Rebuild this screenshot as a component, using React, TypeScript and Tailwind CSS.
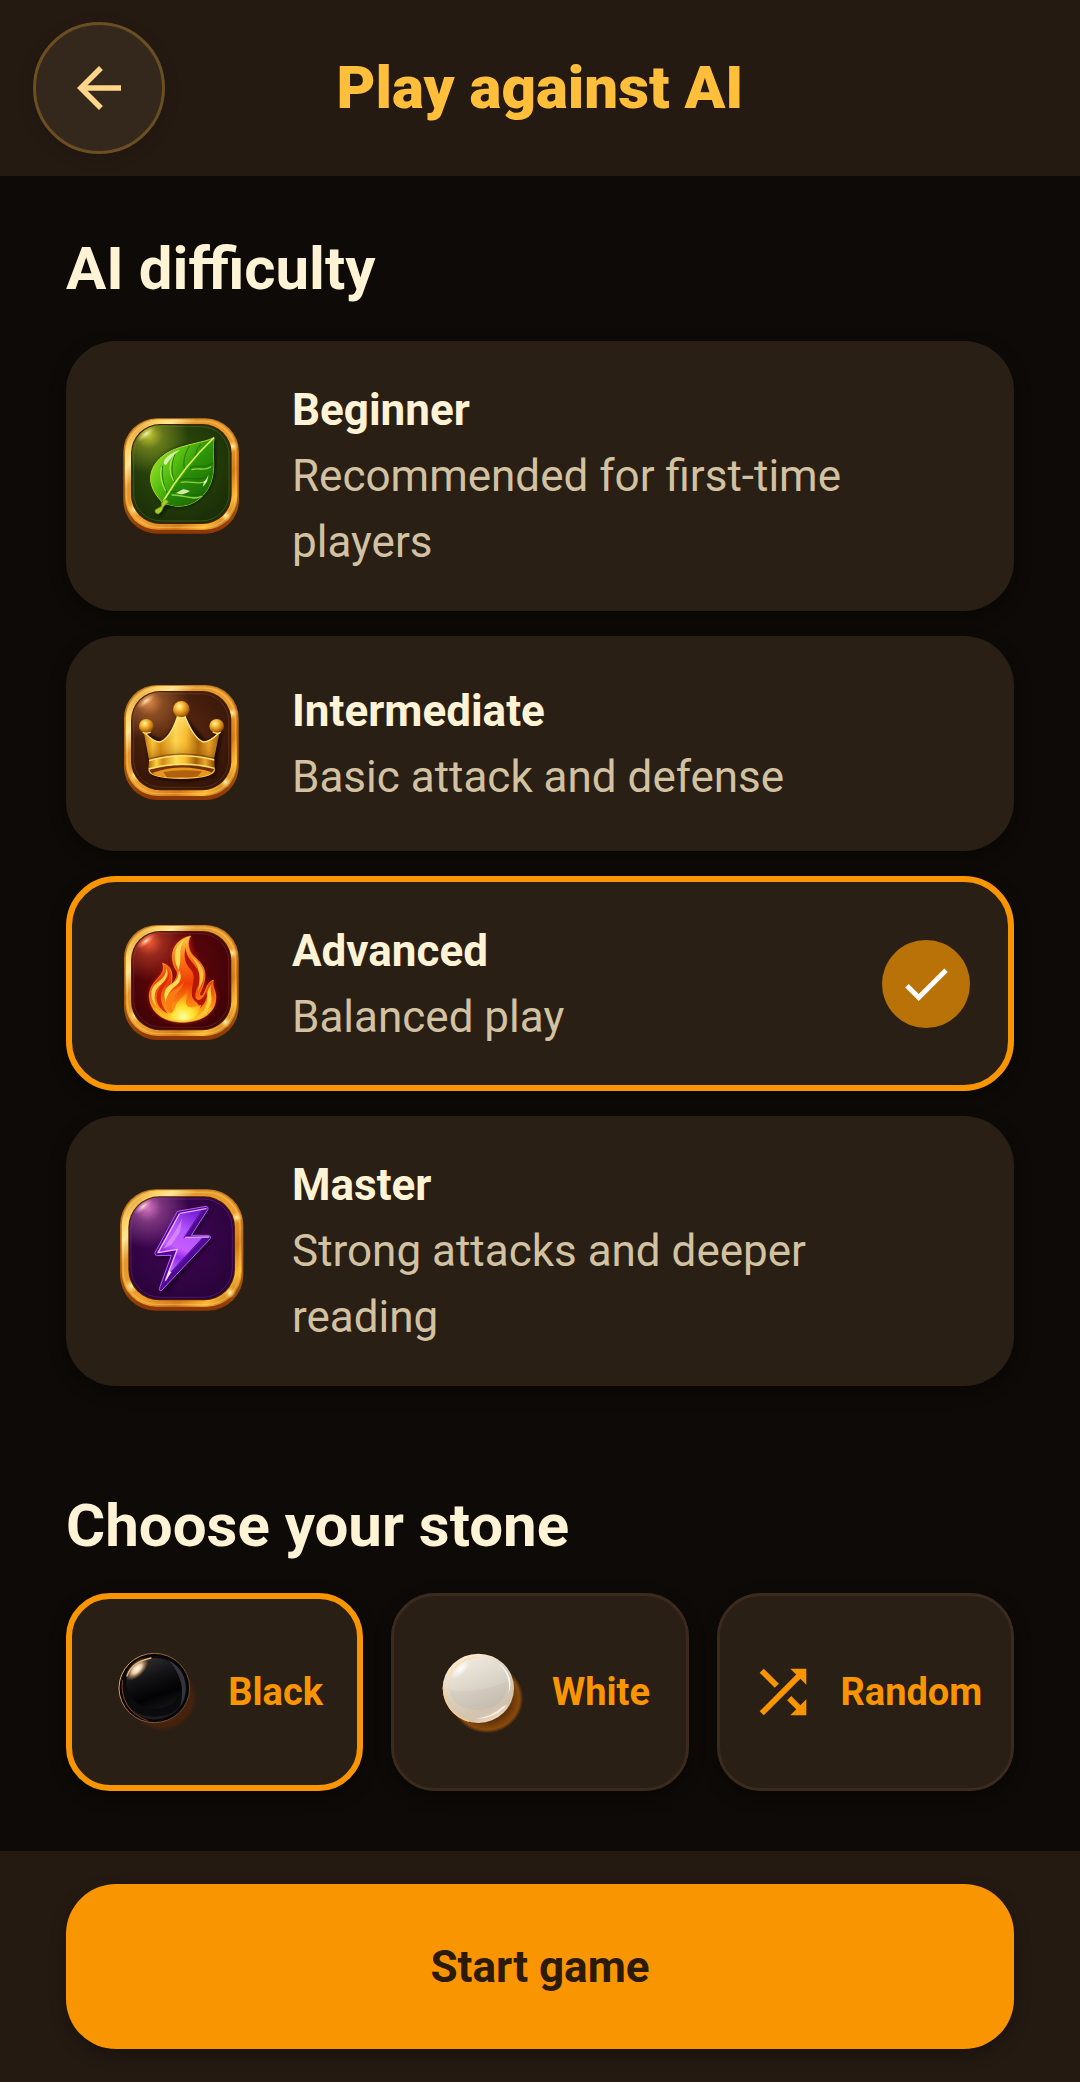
import { useState, type ReactNode } from "react";

type Box = [number, number, number, number];

/* Rounded square given by its left, top, right and bottom edges. */
function Plate({ box, inset = [0, 0, 0, 0], ...rest }: { box: Box; inset?: Box } & React.SVGProps<SVGRectElement>) {
  const x = box[0] + inset[0];
  const y = box[1] + inset[1];
  const width = box[2] - inset[2] - x;
  const height = box[3] - inset[3] - y;
  return <rect x={x} y={y} width={width} height={height} rx={width * 0.29} {...rest} />;
}

type BadgeProps = {
  id: string;
  top: number;
  outer: Box;
  inner: Box;
  center: string;
  edge: string;
  shine: string;
  rim: string;
  children: ReactNode;
};

/* Glossy game badge: gold bevelled frame around a coloured enamel plate. */
function Badge({ id, top, outer, inner, center, edge, shine, rim, children }: BadgeProps) {
  const [l, t, r, b] = outer;
  const [il, it] = inner;
  return (
    <svg viewBox={`30 ${top} 429 429`} className="size-[143px] shrink-0" aria-hidden="true">
      <defs>
        <linearGradient id={`${id}-gold`} x1="0" y1="0" x2="1" y2="1">
          <stop offset="0" stopColor="#b9690f" />
          <stop offset="0.15" stopColor="#ffd263" />
          <stop offset="0.22" stopColor="#ffe796" />
          <stop offset="0.32" stopColor="#e3962a" />
          <stop offset="0.55" stopColor="#ee9f2d" />
          <stop offset="0.72" stopColor="#d67a17" />
          <stop offset="0.84" stopColor="#ffb833" />
          <stop offset="1" stopColor="#8a3a05" />
        </linearGradient>
        <linearGradient id={`${id}-under`} x1="0" y1="0" x2="0" y2="1">
          <stop offset="0" stopColor="#c87c1d" />
          <stop offset="0.7" stopColor="#a75c0e" />
          <stop offset="1" stopColor="#8c3605" />
        </linearGradient>
        <radialGradient id={`${id}-plate`} cx="0.45" cy="0.38" r="0.85">
          <stop offset="0" stopColor={center} />
          <stop offset="1" stopColor={edge} />
        </radialGradient>
        <radialGradient id={`${id}-shine`} cx="0.17" cy="0.1" r="0.4">
          <stop offset="0" stopColor={shine} stopOpacity="0.95" />
          <stop offset="0.35" stopColor={shine} stopOpacity="0.4" />
          <stop offset="1" stopColor={shine} stopOpacity="0" />
        </radialGradient>
        <radialGradient id={`${id}-spark`}>
          <stop offset="0" stopColor="#fff6bd" />
          <stop offset="1" stopColor="#ffc545" stopOpacity="0" />
        </radialGradient>
        <radialGradient id={`${id}-glint`}>
          <stop offset="0" stopColor="#fff8d8" stopOpacity="0.9" />
          <stop offset="1" stopColor={shine} stopOpacity="0" />
        </radialGradient>
      </defs>
      <Plate box={outer} fill={`url(#${id}-under)`} />
      <Plate box={outer} inset={[5, 3, 5, 12]} fill={`url(#${id}-gold)`} />
      <Plate box={outer} inset={[10, 9, 10, 19]} fill="none" stroke="#ffe08a" strokeOpacity="0.35" strokeWidth="4" />
      <circle cx={l + 34} cy={b - 74} r="22" fill={`url(#${id}-spark)`} />
      <circle cx={r - 40} cy={b - 54} r="18" fill={`url(#${id}-spark)`} />
      <circle cx={r - 20} cy={t + 84} r="18" fill={`url(#${id}-spark)`} />
      <Plate box={inner} inset={[-3, -3, -3, -3]} fill="#4a2106" />
      <Plate box={inner} fill={`url(#${id}-plate)`} />
      <Plate box={inner} fill={`url(#${id}-shine)`} />
      <Plate box={inner} inset={[5, 5, 5, 6]} fill="none" stroke={rim} strokeOpacity="0.35" strokeWidth="3" />
      <ellipse cx={il + 42} cy={it + 27} rx="34" ry="13" transform={`rotate(-38 ${il + 42} ${it + 27})`} fill={`url(#${id}-glint)`} />
      {children}
    </svg>
  );
}

function LeafIcon() {
  return (
    <Badge id="leaf" top={44} outer={[70, 84, 417, 430]} inner={[96, 104, 392, 398]} center="#30500d" edge="#142406" shine="#c9cf33" rim="#6f9a3c">
      <defs>
        <linearGradient id="leaf-fill" x1="0" y1="0.2" x2="1" y2="0.9">
          <stop offset="0" stopColor="#a4ea2c" />
          <stop offset="0.35" stopColor="#52bd10" />
          <stop offset="0.6" stopColor="#2a8c08" />
          <stop offset="1" stopColor="#6fd321" />
        </linearGradient>
        <linearGradient id="leaf-low" x1="0" y1="0" x2="0.6" y2="1">
          <stop offset="0" stopColor="#8be52b" />
          <stop offset="0.5" stopColor="#2f960a" />
          <stop offset="1" stopColor="#1b6c06" />
        </linearGradient>
        <filter id="leaf-soft" x="-30%" y="-30%" width="160%" height="160%">
          <feGaussianBlur stdDeviation="4" />
        </filter>
      </defs>
      <path d="M348 150C330 158 230 158 190 195C152 228 144 278 178 322L190 346L168 372L184 378L206 350C262 362 318 334 340 270C354 228 344 190 348 150Z" fill="#061002" opacity="0.6" filter="url(#leaf-soft)" />
      <path d="M342 142C310 160 222 162 180 204C142 242 142 286 182 330C184 338 196 342 208 343C252 358 310 336 332 278C350 228 334 190 342 142Z" fill="url(#leaf-fill)" stroke="#b4dc2a" strokeWidth="3" />
      <path d="M342 142C318 180 250 246 190 336C198 342 204 343 208 343C252 358 310 336 332 278C350 228 334 190 342 142Z" fill="url(#leaf-low)" />
      <g fill="none" stroke="#1b6506" strokeWidth="3" strokeOpacity="0.8">
        <path d="M204 312C190 286 184 256 188 226" />
        <path d="M226 280C212 250 214 218 226 188" />
        <path d="M256 242C246 220 254 190 268 168" />
        <path d="M288 204C284 190 292 174 302 162" />
        <path d="M212 304C250 300 290 330 312 302" />
        <path d="M238 268C266 258 302 278 334 250" />
        <path d="M270 232C290 222 312 236 338 218" />
      </g>
      <g fill="none" stroke="#c7f95e" strokeWidth="4" strokeOpacity="0.65" strokeLinecap="round">
        <path d="M196 300C182 274 180 250 184 232" />
        <path d="M220 270C206 246 208 220 220 196" />
        <path d="M216 314C250 312 280 332 304 318" />
        <path d="M244 276C270 270 298 286 320 272" />
        <path d="M276 238C294 230 312 244 332 230" />
      </g>
      <path d="M194 208C206 192 222 184 240 178C222 192 210 204 200 222C194 226 188 220 194 208ZM246 298C252 294 262 300 270 302C258 312 240 314 228 308ZM312 274C320 266 324 258 326 250C324 270 318 280 308 290Z" fill="#eaffc0" opacity="0.85" />
      <path d="M342 142C308 174 246 238 190 332" fill="none" stroke="#d4ee59" strokeWidth="5" />
      <path d="M196 326L184 338L184 348L166 358Q162 370 176 371Q188 364 190 350L206 334Z" fill="#a6cc2c" stroke="#627d12" strokeWidth="2" />
    </Badge>
  );
}

function CrownIcon() {
  return (
    <Badge id="crown" top={36} outer={[72, 75, 416, 420]} inner={[96, 96, 391, 388]} center="#5c2910" edge="#280f06" shine="#e99149" rim="#9a5b3a">
      <defs>
        <linearGradient id="crown-body" x1="0" y1="0" x2="1" y2="0">
          <stop offset="0" stopColor="#b96b08" />
          <stop offset="0.12" stopColor="#ffcf3f" />
          <stop offset="0.22" stopColor="#d48a15" />
          <stop offset="0.42" stopColor="#ffdd56" />
          <stop offset="0.56" stopColor="#f9bd32" />
          <stop offset="0.72" stopColor="#a45f09" />
          <stop offset="0.86" stopColor="#eda72a" />
          <stop offset="1" stopColor="#8c4b05" />
        </linearGradient>
        <linearGradient id="crown-shade" x1="0" y1="0" x2="0" y2="1">
          <stop offset="0" stopColor="#fff09a" stopOpacity="0.45" />
          <stop offset="0.55" stopColor="#e9a020" stopOpacity="0.1" />
          <stop offset="1" stopColor="#8c4a04" stopOpacity="0.65" />
        </linearGradient>
        <radialGradient id="crown-ball" cx="0.38" cy="0.32" r="0.7">
          <stop offset="0" stopColor="#fff8b6" />
          <stop offset="0.35" stopColor="#fbbd33" />
          <stop offset="0.8" stopColor="#b96c0d" />
          <stop offset="1" stopColor="#7b3f05" />
        </radialGradient>
        <filter id="crown-soft" x="-30%" y="-30%" width="160%" height="160%">
          <feGaussianBlur stdDeviation="5" />
        </filter>
      </defs>
      <path d="M136 216L150 346Q246 384 346 346L366 214L318 244L248 160L190 244Z" fill="#100401" opacity="0.7" filter="url(#crown-soft)" />
      <path d="M131 215Q160 246 180 246Q210 236 232 172L256 172Q284 238 310 246Q330 246 359 217L341 300Q244 276 148 302Z" fill="url(#crown-body)" />
      <path d="M131 215Q160 246 180 246Q210 236 232 172L256 172Q284 238 310 246Q330 246 359 217L341 300Q244 276 148 302Z" fill="url(#crown-shade)" />
      <path d="M131 215Q160 246 180 246Q210 236 232 172M256 172Q284 238 310 246Q330 246 359 217" fill="none" stroke="#ffe879" strokeWidth="4" />
      <path d="M147 302Q244 274 343 300L343 338Q332 354 244 355Q156 352 147 340Z" fill="#743004" />
      <path d="M158 338Q244 308 334 336Q324 353 244 353Q166 352 158 338Z" fill="#e9961f" />
      <path d="M190 336Q244 326 306 334L290 352L200 352Z" fill="#8a3a05" opacity="0.6" />
      <path d="M147 300Q244 272 343 298L344 328Q244 302 145 330Z" fill="url(#crown-body)" />
      <path d="M147 302Q244 274 343 300M146 327Q244 299 344 325" fill="none" stroke="#ffe779" strokeWidth="4" />
      <path d="M148 296Q244 268 342 294M145 333Q244 305 344 331" fill="none" stroke="#693204" strokeWidth="2" />
      <path d="M147 330Q150 354 244 355Q338 354 344 328" fill="none" stroke="#ffc43d" strokeWidth="4" />
      <ellipse cx="139" cy="198" rx="22" ry="21" fill="url(#crown-ball)" />
      <ellipse cx="350" cy="198" rx="22" ry="21" fill="url(#crown-ball)" />
      <circle cx="244" cy="148" r="25" fill="url(#crown-ball)" />
      <path d="M128 217Q140 223 152 216M338 216Q350 223 362 217M230 170Q244 177 258 170" fill="none" stroke="#ffe37a" strokeWidth="4" />
    </Badge>
  );
}

function FlameIcon() {
  return (
    <Badge id="flame" top={36} outer={[72, 75, 416, 420]} inner={[96, 96, 391, 388]} center="#66060a" edge="#330307" shine="#ff633a" rim="#b03a48">
      <defs>
        <linearGradient id="flame-outer" x1="0" y1="0" x2="0" y2="1">
          <stop offset="0" stopColor="#ffc845" />
          <stop offset="0.25" stopColor="#ff7a17" />
          <stop offset="0.55" stopColor="#ee3c06" />
          <stop offset="0.85" stopColor="#ff9a14" />
          <stop offset="1" stopColor="#ffd52c" />
        </linearGradient>
        <radialGradient id="flame-core" cx="0.5" cy="0.85" r="0.75">
          <stop offset="0" stopColor="#ffffa0" />
          <stop offset="0.4" stopColor="#ffe02c" />
          <stop offset="0.8" stopColor="#ff9c14" />
          <stop offset="1" stopColor="#ff6a0a" />
        </radialGradient>
        <filter id="flame-glow" x="-30%" y="-30%" width="160%" height="160%">
          <feGaussianBlur stdDeviation="8" />
        </filter>
      </defs>
      <path d="M272 108C206 128 210 180 232 226L214 258C222 220 214 200 188 190C200 232 150 232 148 286C150 340 194 366 246 367C304 366 346 340 347 292C350 270 334 260 340 240C322 250 318 266 312 276C334 214 264 176 272 108Z" fill="#f02206" opacity="0.65" filter="url(#flame-glow)" />
      <path d="M272 108C214 120 204 176 232 216C234 232 222 246 212 258C222 220 214 198 188 190C202 230 150 236 148 288C150 342 196 366 246 367C304 366 346 340 347 296C350 274 334 262 340 240C320 248 320 268 310 284C304 292 296 288 300 278C330 214 310 194 280 168C264 152 260 126 272 108Z" fill="url(#flame-outer)" stroke="#ffa63b" strokeWidth="2" />
      <path d="M254 118C224 138 216 170 234 206C252 234 238 250 222 262C206 276 196 294 202 318C186 284 192 262 218 250C244 232 232 214 240 190C244 168 234 148 254 118Z" fill="#ffdc56" />
      <path d="M258 142C254 176 294 196 298 224C304 250 284 266 286 290C292 310 312 296 318 276C326 290 314 314 296 328C304 306 276 306 276 284C274 252 292 228 270 206C254 190 250 166 258 142Z" fill="#b51503" />
      <path d="M272 166C290 184 318 200 310 238C306 256 298 264 294 276C302 232 304 210 272 166Z" fill="#ffbc38" />
      <path d="M198 204C212 226 192 246 178 258C162 272 158 300 174 324C150 302 146 270 168 250C188 236 200 226 198 204Z" fill="#ffd24c" />
      <path d="M206 214C214 238 190 252 184 278C178 302 190 326 206 342C174 328 162 298 174 272C184 252 208 240 206 214Z" fill="#d62a05" />
      <path d="M336 252C326 270 338 284 334 306C328 330 310 344 294 350C320 330 320 312 322 292C322 274 326 262 336 252Z" fill="#ffcf3d" />
      <path d="M254 236C250 268 220 280 216 310C214 330 224 346 236 352C206 346 192 322 200 294C212 264 248 266 254 236Z" fill="#ff7c12" />
      <path d="M262 266C268 292 250 302 262 318C272 328 290 318 304 314C296 340 284 364 246 366C214 364 196 350 194 336C208 346 222 338 226 320C230 298 258 290 262 266Z" fill="url(#flame-core)" />
      <path d="M168 326Q200 362 246 364Q300 362 332 324" fill="none" stroke="#ffca2a" strokeWidth="4" strokeLinecap="round" />
    </Badge>
  );
}

function BoltIcon() {
  return (
    <Badge id="bolt" top={44} outer={[60, 72, 430, 436]} inner={[88, 96, 402, 402]} center="#420558" edge="#220330" shine="#e07cc8" rim="#9a35c4">
      <defs>
        <linearGradient id="bolt-fill" x1="0.6" y1="0" x2="0.35" y2="1">
          <stop offset="0" stopColor="#7c22d8" />
          <stop offset="0.25" stopColor="#b455ff" />
          <stop offset="0.5" stopColor="#c65cff" />
          <stop offset="0.62" stopColor="#9628ee" />
          <stop offset="0.85" stopColor="#c77aff" />
          <stop offset="1" stopColor="#5b16a8" />
        </linearGradient>
        <filter id="bolt-soft" x="-30%" y="-30%" width="160%" height="160%">
          <feGaussianBlur stdDeviation="6" />
        </filter>
      </defs>
      <path d="M242 144L330 130L276 220L342 218L190 384L226 274L170 276Z" fill="#0c0012" opacity="0.8" filter="url(#bolt-soft)" />
      <path d="M232 138L318 123Q326 124 324 132L274 210L326 210Q334 212 331 220L186 374Q178 380 178 370L214 270L170 271Q162 268 165 262Z" fill="#4d0c91" stroke="#c05cf7" strokeWidth="3" strokeLinejoin="round" />
      <path d="M238 146L306 132L250 218L306 218L208 324L188 364L232 254L174 262Z" fill="url(#bolt-fill)" />
      <path d="M238 146L174 262L232 252L196 346" fill="none" stroke="#f0b8ff" strokeWidth="4" strokeLinejoin="round" />
      <path d="M240 144L318 130M256 216L326 215" fill="none" stroke="#e6a6ff" strokeWidth="4" strokeLinecap="round" />
      <path d="M306 136L252 218M304 224L210 326" fill="none" stroke="#6a1cc0" strokeWidth="3" />
      <path d="M232 188L246 160L240 200L214 238L190 250Z" fill="#e2a3ff" opacity="0.6" />
      <path d="M206 318L214 320L198 346Z" fill="#ffe6ff" />
    </Badge>
  );
}

function BlackStone() {
  return (
    <svg viewBox="201 216 300 300" className="size-[100px] shrink-0" aria-hidden="true">
      <defs>
        <radialGradient id="bs-shadow">
          <stop offset="0.6" stopColor="#4c230a" />
          <stop offset="0.85" stopColor="#4c230a" stopOpacity="0.75" />
          <stop offset="1" stopColor="#4c230a" stopOpacity="0" />
        </radialGradient>
        <linearGradient id="bs-body" x1="0.2" y1="0" x2="0.6" y2="1">
          <stop offset="0" stopColor="#33302f" />
          <stop offset="0.4" stopColor="#131316" />
          <stop offset="0.75" stopColor="#020203" />
          <stop offset="1" stopColor="#131317" />
        </linearGradient>
        <linearGradient id="bs-edge" x1="0" y1="0.3" x2="1" y2="0.7">
          <stop offset="0" stopColor="#f6b266" />
          <stop offset="0.3" stopColor="#a2683a" />
          <stop offset="1" stopColor="#5d4636" />
        </linearGradient>
        <radialGradient id="bs-glint">
          <stop offset="0" stopColor="#ffffff" />
          <stop offset="0.4" stopColor="#ffe0b8" stopOpacity="0.9" />
          <stop offset="1" stopColor="#d08a4a" stopOpacity="0" />
        </radialGradient>
      </defs>
      <ellipse cx="370" cy="384" rx="104" ry="100" fill="url(#bs-shadow)" />
      <ellipse cx="346" cy="354" rx="106" ry="104" fill="#050507" stroke="url(#bs-edge)" strokeWidth="3" />
      <ellipse cx="346" cy="354" rx="98" ry="97" fill="#0b0b0e" />
      <path d="M256 388A96 92 0 0 0 436 388Q410 440 346 440Q282 440 256 388Z" fill="#1d1d22" />
      <ellipse cx="348" cy="340" rx="86" ry="76" fill="url(#bs-body)" />
      <path d="M388 270Q444 302 440 362Q438 390 424 408Q444 330 388 270Z" fill="#3d3f48" opacity="0.8" />
      <ellipse cx="294" cy="297" rx="44" ry="22" transform="rotate(-45 294 297)" fill="url(#bs-glint)" />
      <path d="M264 318Q278 276 336 264" fill="none" stroke="#e7b27a" strokeWidth="4" strokeLinecap="round" />
      <path d="M250 330Q242 420 326 452" fill="none" stroke="#7a4420" strokeWidth="3" />
    </svg>
  );
}

function WhiteStone() {
  return (
    <svg viewBox="1173 216 300 300" className="size-[100px] shrink-0" aria-hidden="true">
      <defs>
        <radialGradient id="ws-shadow">
          <stop offset="0.6" stopColor="#5a2c06" />
          <stop offset="0.9" stopColor="#894a0d" />
          <stop offset="1" stopColor="#894a0d" stopOpacity="0.1" />
        </radialGradient>
        <linearGradient id="ws-base" x1="0.2" y1="0" x2="0.7" y2="1">
          <stop offset="0" stopColor="#fff1da" />
          <stop offset="0.5" stopColor="#d9cdbb" />
          <stop offset="0.85" stopColor="#d2c2ae" />
          <stop offset="1" stopColor="#f4dfc6" />
        </linearGradient>
        <linearGradient id="ws-body" x1="0.2" y1="0" x2="0.7" y2="1">
          <stop offset="0" stopColor="#f1ebe0" />
          <stop offset="0.5" stopColor="#dcd6ca" />
          <stop offset="1" stopColor="#c8c0b3" />
        </linearGradient>
        <radialGradient id="ws-glint">
          <stop offset="0" stopColor="#ffffff" />
          <stop offset="1" stopColor="#ffffff" stopOpacity="0" />
        </radialGradient>
      </defs>
      <ellipse cx="1344" cy="386" rx="108" ry="103" fill="url(#ws-shadow)" />
      <ellipse cx="1318" cy="355" rx="107" ry="104" fill="url(#ws-base)" />
      <path d="M1213 350Q1216 430 1290 454" fill="none" stroke="#ffc983" strokeWidth="4" />
      <ellipse cx="1320" cy="342" rx="88" ry="78" fill="url(#ws-body)" />
      <path d="M1234 360Q1320 372 1406 334Q1400 420 1320 420Q1244 420 1234 360Z" fill="#b9b0a2" opacity="0.2" />
      <path d="M1366 272Q1420 308 1408 372Q1432 310 1366 272Z" fill="#ffffff" opacity="0.9" />
      <path d="M1390 410Q1360 440 1310 446Q1370 446 1404 404Z" fill="#fff8ec" opacity="0.8" />
      <ellipse cx="1264" cy="297" rx="38" ry="17" transform="rotate(-45 1264 297)" fill="url(#ws-glint)" />
      <path d="M1232 316Q1256 268 1312 261" fill="none" stroke="#ffdcaa" strokeWidth="4" strokeLinecap="round" />
    </svg>
  );
}

function ShuffleIcon() {
  return (
    <svg viewBox="0 0 24 24" className="size-[70px] shrink-0 fill-current" aria-hidden="true">
      <path d="M10.59 9.17L5.41 4 4 5.41l5.17 5.17 1.42-1.41zM14.5 4l2.04 2.04L4 18.59 5.41 20 17.96 7.46 20 9.5V4h-5.5zm.33 9.41l-1.41 1.41 3.13 3.13L14.5 20H20v-5.5l-2.04 2.04-3.13-3.13z" />
    </svg>
  );
}

const levels = [
  { id: "beginner", name: "Beginner", text: "Recommended for first-time players", icon: <LeafIcon /> },
  { id: "intermediate", name: "Intermediate", text: "Basic attack and defense", icon: <CrownIcon /> },
  { id: "advanced", name: "Advanced", text: "Balanced play", icon: <FlameIcon /> },
  { id: "master", name: "Master", text: "Strong attacks and deeper reading", icon: <BoltIcon /> },
];

const stones = [
  { id: "black", name: "Black", icon: <BlackStone /> },
  { id: "white", name: "White", icon: <WhiteStone /> },
  { id: "random", name: "Random", icon: <ShuffleIcon /> },
];

export default function App() {
  const [level, setLevel] = useState("advanced");
  const [stone, setStone] = useState("black");

  return (
    <div className="flex min-h-screen flex-col bg-[#0d0a07] font-[Roboto,sans-serif] text-[#fff3d6]">
      <header className="grid grid-cols-[132px_1fr_132px] items-center bg-[#241a12] px-[33px] py-[22px]">
        <button
          type="button"
          aria-label="Back"
          className="flex size-[132px] items-center justify-center rounded-full border-[3px] border-[#6b4f22] bg-[#34281d] text-[#ffd58a] shadow-[0_4px_16px_rgba(0,0,0,0.15)]"
        >
          <svg viewBox="0 0 24 24" className="size-[66px] fill-current" aria-hidden="true">
            <path d="M20 11H7.83l5.59-5.59L12 4l-8 8 8 8 1.41-1.41L7.83 13H20v-2z" />
          </svg>
        </button>
        <h1 className="text-center text-[60px] leading-[76px] font-black text-[#ffbf3a]">Play against AI</h1>
      </header>

      <main className="flex flex-1 flex-col px-[66px] pt-[55px] pb-[60px]">
        <h2 id="level-title" className="text-[60px] leading-[76px] font-bold">AI difficulty</h2>
        <div role="radiogroup" aria-labelledby="level-title" className="mt-[34px] flex flex-col gap-[25px]">
          {levels.map((item) => (
            <label
              key={item.id}
              className="relative flex cursor-pointer items-center rounded-[50px] bg-[#291f15] px-[44px] py-[36px] shadow-[0_6px_16px_rgba(0,0,0,0.35)] has-checked:outline-6 has-checked:-outline-offset-6 has-checked:outline-[#f99500]"
            >
              <input
                type="radio"
                name="level"
                value={item.id}
                checked={level === item.id}
                onChange={() => setLevel(item.id)}
                className="sr-only"
              />
              {item.icon}
              <span className="mr-[22px] ml-[39px] flex-1 text-[44px] leading-[66px]">
                <span className="block font-bold">{item.name}</span>
                <span className="block text-[#d3c2a2]">{item.text}</span>
              </span>
              {level === item.id && (
                <span className="flex size-[88px] shrink-0 items-center justify-center rounded-full bg-[#b97207] text-white">
                  <svg viewBox="0 0 24 24" className="size-[58px] fill-current" aria-hidden="true">
                    <path d="M9 16.17L4.83 12l-1.42 1.41L9 19 21 7l-1.41-1.41z" />
                  </svg>
                </span>
              )}
            </label>
          ))}
        </div>

        <h2 id="stone-title" className="mt-[102px] text-[60px] leading-[76px] font-bold">Choose your stone</h2>
        <div role="radiogroup" aria-labelledby="stone-title" className="mt-[29px] grid grid-cols-3 gap-[28px]">
          {stones.map((item) => (
            <label
              key={item.id}
              className="relative flex h-[198px] cursor-pointer items-center justify-center gap-[22px] rounded-[44px] bg-[#291f15] text-[38px] leading-[55px] font-bold text-[#f99500] shadow-[0_6px_16px_rgba(0,0,0,0.35)] outline-3 -outline-offset-3 outline-[#3b2a1e] has-checked:outline-6 has-checked:-outline-offset-6 has-checked:outline-[#f99500]"
            >
              <input
                type="radio"
                name="stone"
                value={item.id}
                checked={stone === item.id}
                onChange={() => setStone(item.id)}
                className="sr-only"
              />
              {item.icon}
              <span>{item.name}</span>
            </label>
          ))}
        </div>
      </main>

      <footer className="bg-[#241a12] px-[66px] py-[33px]">
        <button
          type="button"
          className="h-[165px] w-full rounded-[50px] bg-[#f99500] text-[44px] leading-[66px] font-bold text-[#2b1a05] shadow-[0_6px_16px_rgba(0,0,0,0.3)]"
        >
          Start game
        </button>
      </footer>
    </div>
  );
}
